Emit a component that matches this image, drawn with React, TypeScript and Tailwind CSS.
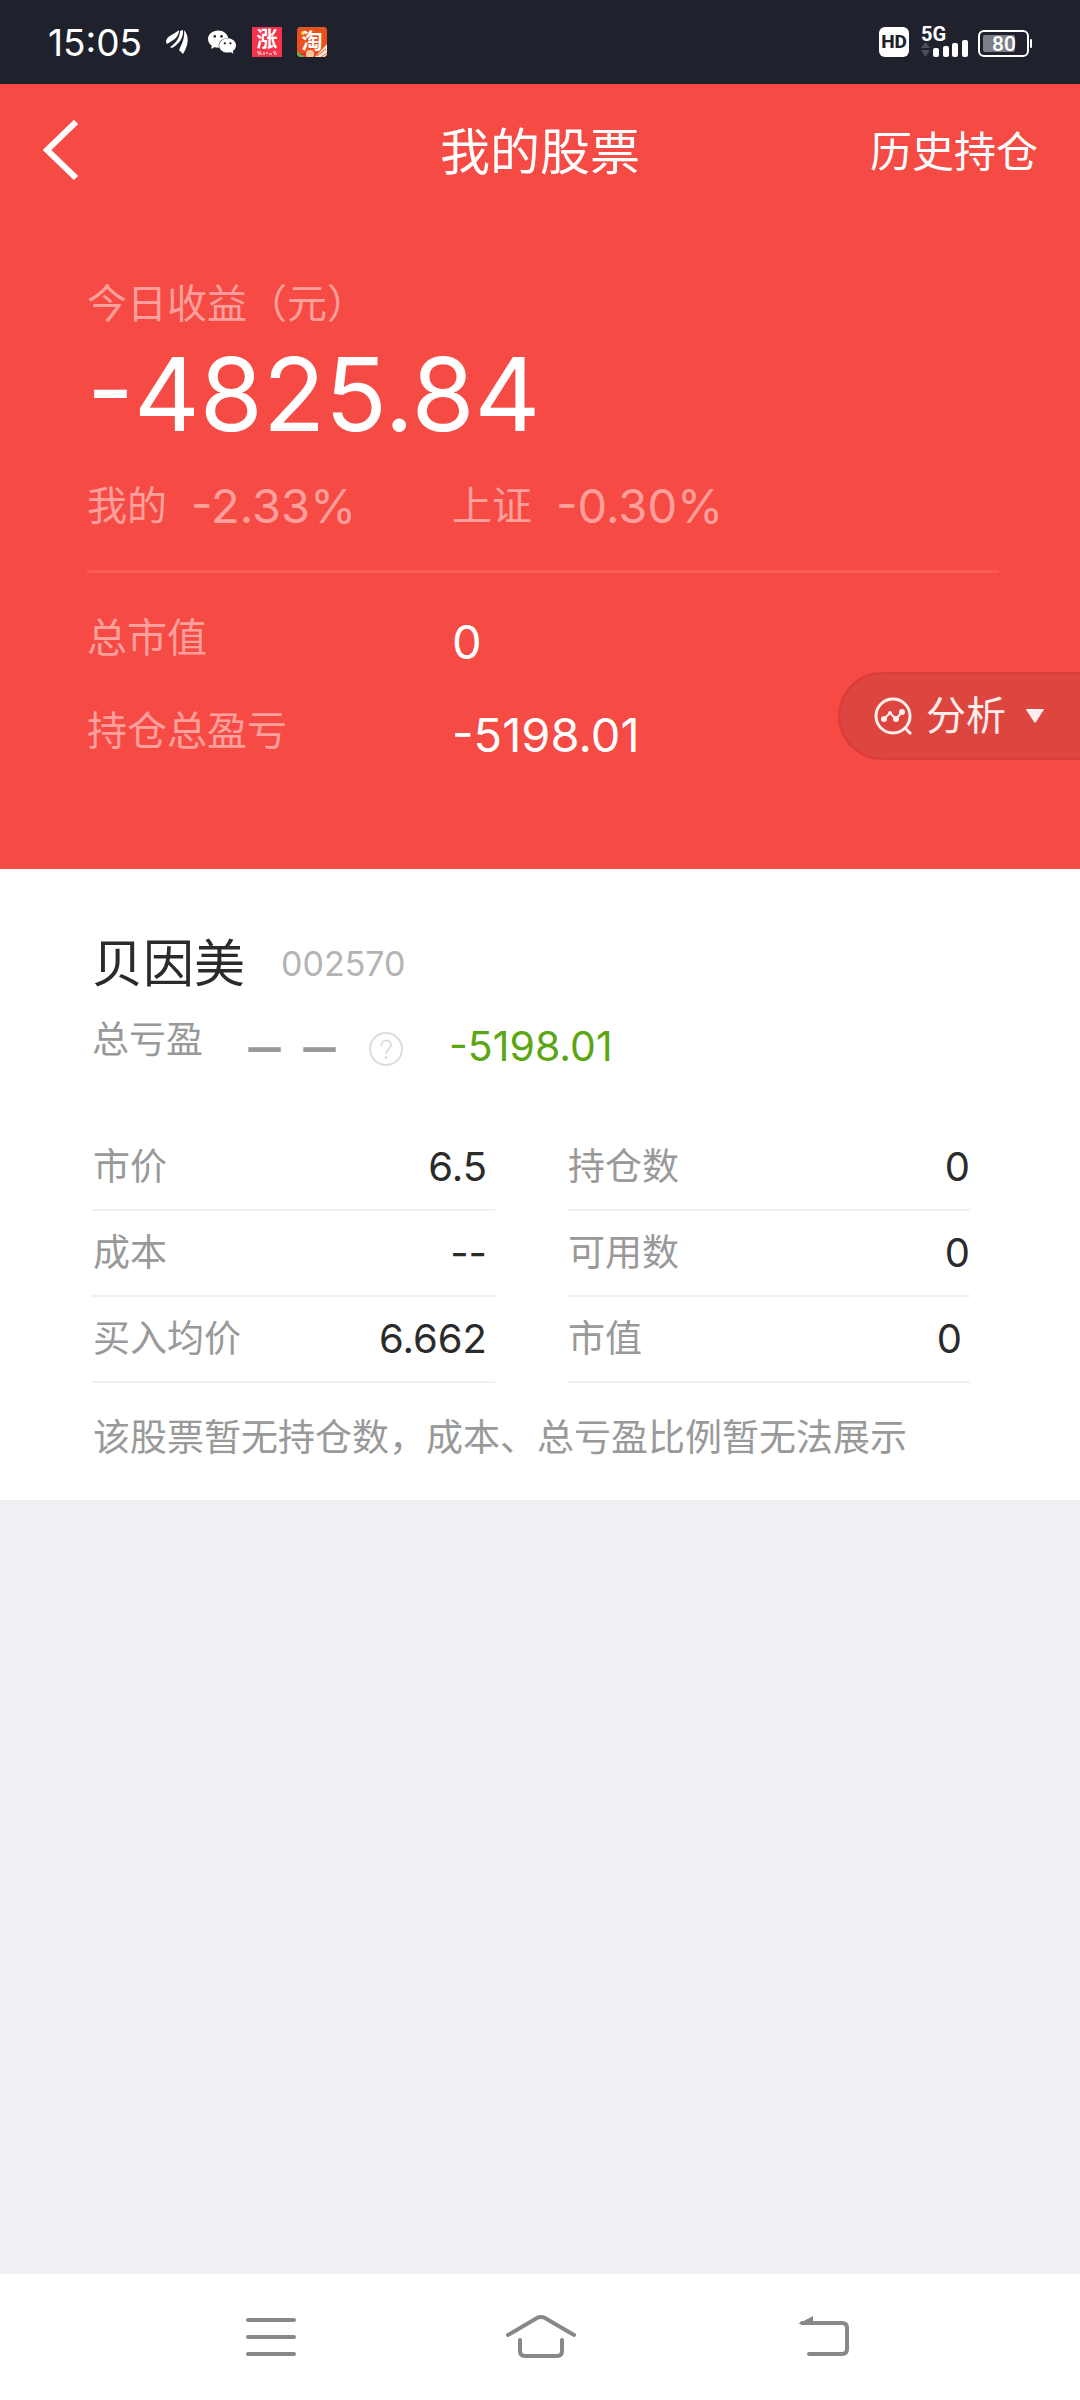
import clsx from "clsx";
import { SiWechat } from "react-icons/si";

const leftColumn = [
  { label: "市价", value: "6.5" },
  { label: "成本", value: "--" },
  { label: "买入均价", value: "6.662" },
];

const rightColumn = [
  { label: "持仓数", value: "0" },
  { label: "可用数", value: "0" },
  { label: "市值", value: "0", inset: true },
];

function StatusBar() {
  return (
    <div className="flex h-[84px] items-center justify-between bg-[#1f222d] px-12 text-white">
      <div className="flex items-center">
        <span className="w-[94px] text-[37px] leading-none">15:05</span>
        <svg className="ml-6 h-6 w-[22px]" viewBox="0 0 22 24" fill="currentColor">
          <path d="M0 12C0 6 7 5 13 0C13 7 8 10 1 14Z" />
          <path d="M4 17C9 14 14 8 14 1L17 0C18 8 12 15 6 18Z" />
          <path d="M13 20C16 14 19 8 18 0C24 7 22 16 17 24Z" />
        </svg>
        <SiWechat className="ml-5 size-7" />
        <span className="ml-4 flex h-[30px] w-[30px] flex-col items-center bg-[#f5334a]">
          <span className="text-[21px] font-bold leading-[24px]">涨</span>
          <svg className="h-1 w-5" viewBox="0 0 20 4" fill="none" stroke="white">
            <path d="M0 1H4M1 3H5M7 1V4M9 2H11M12 3H15M16 1H19M17 3H20" />
          </svg>
        </span>
        <svg className="ml-[15px] h-[30px] w-[30px] rounded" viewBox="0 0 30 30">
          <rect width="30" height="30" fill="#ea4f1e" />
          <path d="M0 5C7 0 20 0 30 4V0H0Z" fill="#d95a2a" />
          <circle cx="6" cy="6" r="2" fill="#ffd23c" />
          <path d="M0 25L5 27L7 30H0Z" fill="#58b947" />
          <path d="M2 25Q6 28 10 25V28H4Z" fill="#e0243c" />
          <circle cx="13" cy="27" r="4" fill="#f3c9a4" />
          <path d="M18 30L30 17V30Z" fill="#f7e4d6" />
          <path d="M20 29L29 22M24 30L30 26" stroke="#e5692f" />
          <text x="15" y="21" textAnchor="middle" fontSize="21" fontWeight="700" fill="white">
            淘
          </text>
        </svg>
      </div>

      <div className="flex items-center">
        <span className="flex h-[30px] w-[30px] items-center justify-center rounded-md bg-white font-['Roboto',sans-serif] text-[19px] font-extrabold text-[#1f222d]">
          HD
        </span>
        <svg className="ml-3 h-[46px] w-12" viewBox="0 -8 48 46" fill="white">
          <text x="0" y="14" fontSize="20" fontWeight="700" fontFamily="Roboto, sans-serif">
            5G
          </text>
          <path d="M0 21L4.500 15L9 21ZM0 23H9L4.500 30Z" fill="#4c4f5a" />
          <rect x="12" y="21" width="6" height="9" rx="2" />
          <rect x="22" y="19" width="6" height="11" rx="2" />
          <rect x="31" y="16" width="6" height="14" rx="2" />
          <rect x="41" y="13" width="6" height="17" rx="2" />
        </svg>
        <svg className="ml-[9px] h-[30px] w-[54px]" viewBox="0 0 54 30" fill="white">
          <rect x="1" y="4" width="49" height="25" rx="5" fill="none" stroke="white" strokeWidth="2" />
          <rect x="5" y="8" width="32" height="17" rx="2" fill="#7d7f87" />
          <rect x="52" y="12" width="2" height="9" rx="1" />
          <text x="26" y="24" textAnchor="middle" fontSize="21" fontWeight="500" fontFamily="Roboto, sans-serif">
            80
          </text>
        </svg>
      </div>
    </div>
  );
}

function StockRow({ label, value, inset }: { label: string; value: string; inset?: boolean }) {
  return (
    <div className="flex h-[86px] items-center justify-between border-b-2 border-[#f0f0f0] pl-px">
      <dt className="text-[37px] text-[#999999]">{label}</dt>
      <dd className={clsx("text-[40px] text-[#2b2b2b]", inset && "pr-2")}>{value}</dd>
    </div>
  );
}

export default function App() {
  return (
    <div className="flex min-h-screen flex-col bg-[#efeff4] font-['Inter','Noto_Sans_CJK_SC',sans-serif]">
      <StatusBar />

      <section className="relative bg-[#f64a44] text-white">
        <header className="grid h-[132px] grid-cols-3 items-center px-[42px]">
          <button aria-label="返回" className="w-10">
            <svg className="h-[60px] w-9" viewBox="0 0 36 60" fill="none" stroke="white" strokeWidth="6">
              <path d="M34 2L5 30L34 58" />
            </svg>
          </button>
          <h1 className="pt-1 text-center text-[50px] leading-[60px]">我的股票</h1>
          <a href="#history" className="pt-1 text-right text-[42px] leading-[60px]">
            历史持仓
          </a>
        </header>

        <div className="px-[87px] pb-[90px] pt-16">
          <p className="text-[40px] leading-[48px] text-[#ffa09c]">今日收益（元）</p>
          <p className="mt-2 text-[102px] leading-[116px]">-4825.84</p>
          <div className="mt-[26px] grid grid-cols-[365px_1fr] leading-[56px] text-[#ffa09c]">
            <p className="flex items-center gap-6">
              <span className="text-[40px]">我的</span>
              <span className="text-[47px]">-2.33%</span>
            </p>
            <p className="flex items-center gap-6">
              <span className="text-[40px]">上证</span>
              <span className="text-[47px]">-0.30%</span>
            </p>
          </div>

          <dl className="mr-[-6px] mt-9 border-t-[3px] border-[#f95a55] pt-5">
            <div className="grid h-[93px] grid-cols-[365px_1fr] items-center leading-[56px]">
              <dt className="pb-1 text-[40px] text-[#ffa09c]">总市值</dt>
              <dd className="pt-1 text-[47px]">0</dd>
            </div>
            <div className="grid h-[93px] grid-cols-[365px_1fr] items-center leading-[56px]">
              <dt className="pb-1 text-[40px] text-[#ffa09c]">持仓总盈亏</dt>
              <dd className="pt-1 text-[47px]">-5198.01</dd>
            </div>
          </dl>
        </div>

        {/* Floating analysis button */}
        <button className="absolute bottom-[109px] right-0 flex h-[88px] w-[242px] items-center rounded-l-full border-y-2 border-l-2 border-[#d93c3a] bg-[#dd463e] pl-[34px] text-[#ffeeee]">
          <svg className="size-[38px]" viewBox="0 0 38 38" fill="none" stroke="currentColor" strokeWidth="3">
            <circle cx="19" cy="19" r="17" />
            <path d="M31 31L37 37" />
            <path d="M10 22L16 16L22 22L28 15" strokeWidth="2" />
            <g fill="currentColor" stroke="none">
              <circle cx="10" cy="22" r="3" />
              <circle cx="16" cy="16" r="2" />
              <circle cx="22" cy="22" r="3" />
              <circle cx="28" cy="15" r="3" />
            </g>
          </svg>
          <span className="ml-[14px] text-[40px] leading-[56px]">分析</span>
          <svg className="ml-5 h-[14px] w-[18px]" viewBox="0 0 18 14" fill="currentColor">
            <path d="M1 0H17Q19 0 17 2L10 13Q9 14 8 13L1 2Q-1 0 1 0Z" />
          </svg>
        </button>
      </section>

      <section className="bg-white pb-[34px] pl-[92px] pr-[110px] pt-[65px]">
        <div className="flex items-center gap-9 leading-[60px]">
          <h2 className="text-[51px] text-[#2b2b2b]">贝因美</h2>
          <span className="text-[34px] text-[#b4b4b4]">002570</span>
        </div>

        <div className="mt-5 flex h-14 items-center leading-[48px]">
          <span className="w-[155px] pb-1 text-[37px] text-[#999999]">总亏盈</span>
          <span className="flex w-[122px] gap-5 pt-2 font-['Noto_Sans',sans-serif] text-[35px] font-black text-[#999999]">
            <span>—</span>
            <span>—</span>
          </span>
          <button aria-label="说明" className="mt-[14px] text-[#dddddd]">
            <svg className="size-[34px]" viewBox="0 0 34 34" fill="none" stroke="currentColor" strokeWidth="2">
              <circle cx="17" cy="17" r="16" />
              <path d="M12 14C12 7 22 7 22 13C22 17 17 17 17 22M17 24V27" />
            </svg>
          </button>
          <span className="ml-[46px] pt-2 text-[41px] text-[#5ba612]">-5198.01</span>
        </div>

        <div className="mt-[55px] grid grid-cols-2 gap-x-[72px]">
          <dl>
            {leftColumn.map((row) => (
              <StockRow key={row.label} {...row} inset />
            ))}
          </dl>
          <dl>
            {rightColumn.map((row) => (
              <StockRow key={row.label} {...row} />
            ))}
          </dl>
        </div>

        <p className="mt-[27px] pl-px text-[37px] leading-[56px] text-[#999999]">
          该股票暂无持仓数，成本、总亏盈比例暂无法展示
        </p>
      </section>

      {/* System navigation */}
      <nav className="mt-auto flex h-[126px] items-center justify-between bg-white pl-[246px] pr-[231px] text-[#888888]">
        <button aria-label="菜单">
          <svg className="h-11 w-[50px]" viewBox="0 0 50 44" fill="none" stroke="currentColor" strokeWidth="4" strokeLinecap="round">
            <path d="M2 5H48M2 22H48M2 39H48" />
          </svg>
        </button>
        <button aria-label="主页">
          <svg className="h-11 w-[70px]" viewBox="0 0 70 44" fill="none" stroke="currentColor" strokeWidth="4" strokeLinecap="round">
            <path d="M2 20L31 3Q35 1 39 3L68 20" />
            <path d="M14 25V36Q14 41 19 41H51Q56 41 56 36V25" />
          </svg>
        </button>
        <button aria-label="后退">
          <svg className="h-11 w-[63px]" viewBox="0 0 63 44" fill="none" stroke="currentColor" strokeWidth="4" strokeLinecap="round">
            <path d="M16 8H56Q61 8 61 13V34Q61 39 56 39H23" />
            <path d="M12 9L27 1V8Z" fill="currentColor" stroke="none" />
          </svg>
        </button>
      </nav>
    </div>
  );
}
